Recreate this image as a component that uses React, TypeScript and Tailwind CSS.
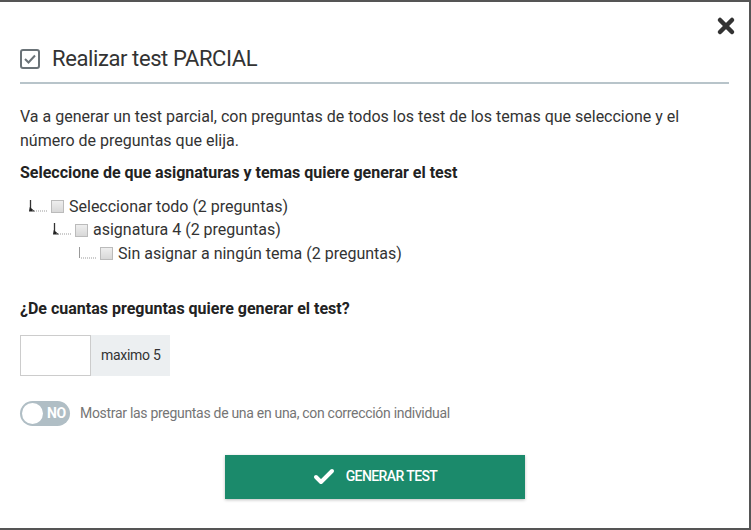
import { Check, X } from 'lucide-react'

type NodeProps = {
  label: string
  indent: string
  corner?: 'arrow' | 'plain'
}

const TreeRow = ({ label, indent, corner = 'arrow' }: NodeProps) => (
  <div className={`flex items-center h-[23.5px] ${indent}`}>
    <svg width="20" height="20" viewBox="0 0 20 20" className="shrink-0">
      <line x1="2.5" y1="3" x2="2.5" y2="14" stroke={corner === 'arrow' ? '#333' : '#999'} strokeWidth={corner === 'arrow' ? 1.3 : 1} />
      {corner === 'arrow' && <path d="M1 14.5 L7 14.5 L1.8 10 Z" fill="#222" />}
      <line x1="4" y1="14" x2="19" y2="14" stroke="#999" strokeWidth="1" strokeDasharray="1 1" />
    </svg>
    <span className="ml-[3px] w-[13px] h-[13px] border border-[#bbb] bg-gradient-to-b from-[#eee] to-[#d8d8d8] shrink-0" />
    <span className="ml-[5px] text-[16px] text-[#333]">{label}</span>
  </div>
)

export default function App() {
  return (
    <div className="w-[751px] h-[530px] bg-white border-t-2 border-r-2 border-b-2 border-[#555] font-['Roboto',sans-serif] text-[#333] relative">
      <button className="absolute right-[11px] top-[12px] text-[#333]">
        <X size={24} strokeWidth={4.5} />
      </button>
      <div className="px-5 pt-[42px]">
        <div className="flex items-center gap-3 pb-2 border-b-2 border-[#b8c4ca]">
          <svg width="20" height="20" viewBox="0 0 20 20">
            <rect x="1" y="1" width="18" height="18" rx="2" fill="none" stroke="#6b7378" strokeWidth="2" />
            <path d="M5 10 L8.5 13.5 L15 6.5" fill="none" stroke="#6b7378" strokeWidth="2" />
          </svg>
          <h1 className="text-[22px] leading-[30px] text-[#333] tracking-[-0.4px]">Realizar test PARCIAL</h1>
        </div>
        <p className="mt-[21px] text-[16px] leading-[24px] text-[#333]">
          Va a generar un test parcial, con preguntas de todos los test de los temas que seleccione y el número de preguntas que elija.
        </p>
        <h2 className="mt-[8px] text-[16px] font-bold text-[#222]">Seleccione de que asignaturas y temas quiere generar el test</h2>
        <div className="mt-[10px]">
          <TreeRow label="Seleccionar todo (2 preguntas)" indent="pl-[8px]" />
          <TreeRow label="asignatura 4 (2 preguntas)" indent="pl-[32px]" />
          <TreeRow label="Sin asignar a ningún tema (2 preguntas)" indent="pl-[57px]" corner="plain" />
        </div>
        <h2 className="mt-[31px] text-[16px] font-bold text-[#222]">¿De cuantas preguntas quiere generar el test?</h2>
        <div className="mt-[14px] flex h-[41px] w-[150px]">
          <input className="w-[71px] shrink-0 h-full border border-[#ccc] bg-white outline-none" />
          <span className="flex items-center px-[10px] flex-1 bg-[#eceff1] text-[14px] text-[#333] tracking-[-0.3px] whitespace-nowrap">maximo 5</span>
        </div>
        <div className="mt-[25px] flex items-center gap-[10px]">
          <div className="w-[50px] h-[25px] rounded-full bg-[#b0bec5] flex items-center px-[2px]">
            <span className="w-[21px] h-[21px] rounded-full bg-white" />
            <span className="ml-[4px] text-[14px] font-bold text-white tracking-[-0.5px]">NO</span>
          </div>
          <span className="text-[14px] text-[#757575] tracking-[-0.3px]">Mostrar las preguntas de una en una, con corrección individual</span>
        </div>
        <div className="mt-[29px] flex justify-center">
          <button className="w-[300px] h-[44px] bg-[#1b8a6b] text-white flex items-center justify-center gap-[10px] shadow-[0_1px_3px_rgba(0,0,0,0.25)]">
            <Check size={24} strokeWidth={4} />
            <span className="text-[14px] font-medium tracking-[-0.6px]">GENERAR TEST</span>
          </button>
        </div>
      </div>
    </div>
  )
}
